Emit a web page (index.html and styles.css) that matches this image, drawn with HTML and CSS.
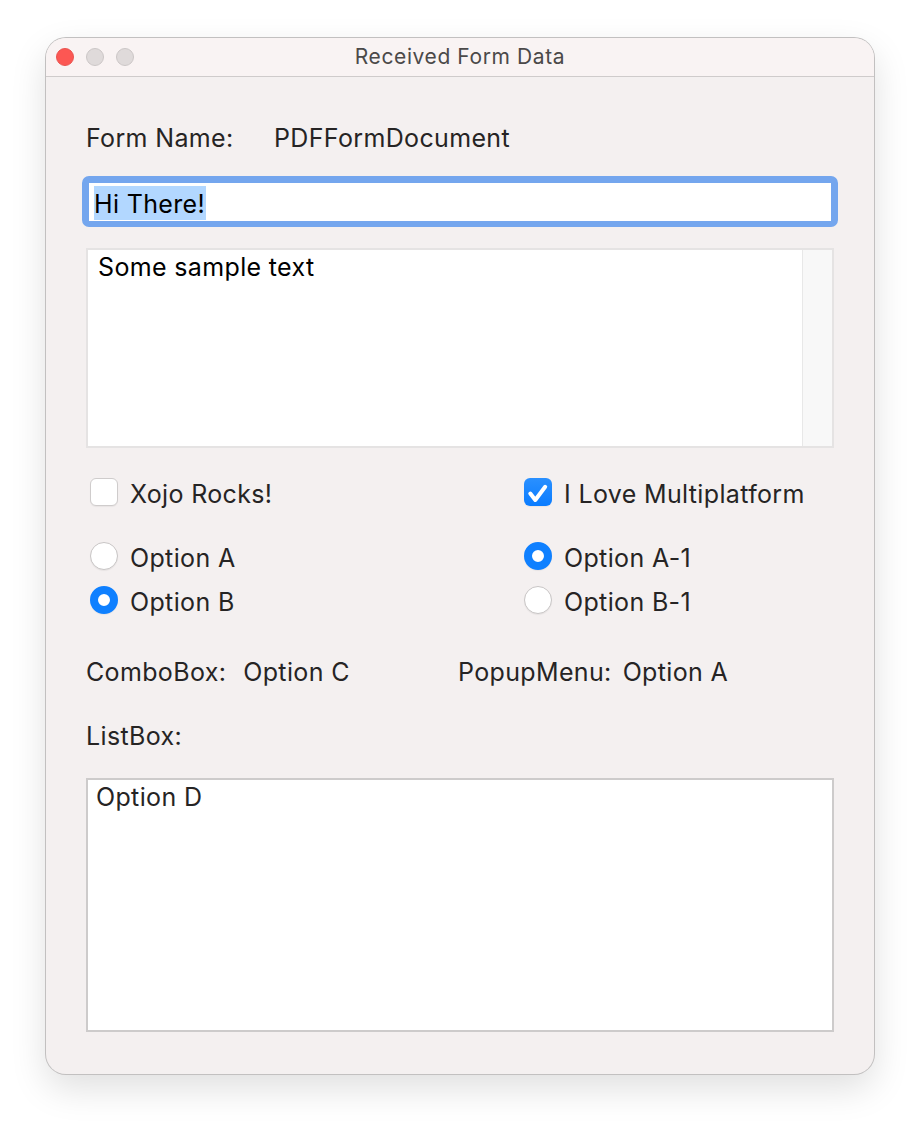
FILE: index.html
```html
<!DOCTYPE html>
<html>
<head>
<meta charset="utf-8" />
<title>Received Form Data</title>
<link rel="stylesheet" href="styles.css">
</head>
<body>
<div class="window">
	<div class="titlebar">
		<div class="lights">
			<span class="light close"></span>
			<span class="light"></span>
			<span class="light"></span>
		</div>
		<div class="title">Received Form Data</div>
	</div>
	<div class="content">
		<div class="row name-row">
			<span class="name-label">Form Name:</span>
			<span>PDFFormDocument</span>
		</div>
		<div class="field"><span class="selected">Hi There!</span></div>
		<div class="textarea">
			<div class="textarea-text">Some sample text</div>
			<div class="scrollbar"></div>
		</div>
		<div class="options">
			<div class="col">
				<div class="opt check-row"><span class="box"></span>Xojo Rocks!</div>
				<div class="opt"><span class="radio"></span>Option A</div>
				<div class="opt"><span class="radio on"></span>Option B</div>
			</div>
			<div class="col">
				<div class="opt check-row">
					<span class="box on">
						<svg viewBox="0 0 28 28" width="28" height="28"><path d="M6.3 15.5 L11.3 22 L21.2 8.8" fill="none" stroke="#fff" stroke-width="4" stroke-linecap="round" stroke-linejoin="round"/></svg>
					</span>I Love Multiplatform
				</div>
				<div class="opt"><span class="radio on"></span>Option A-1</div>
				<div class="opt"><span class="radio"></span>Option B-1</div>
			</div>
		</div>
		<div class="row combo-row">
			<div class="pair combo"><span>ComboBox:</span><span>Option C</span></div>
			<div class="pair popup"><span>PopupMenu:</span><span>Option A</span></div>
		</div>
		<div class="row list-label">ListBox:</div>
		<div class="listbox">Option D</div>
	</div>
</div>
</body>
</html>
```

FILE: styles.css
```css
html{background:#fff;}
body{box-sizing:border-box; margin:0; min-height:1128px; padding:38px 46px 54px; font-family:"Inter","Liberation Sans",sans-serif; font-size:25px; letter-spacing:0.35px; color:#262424;}

.window{box-sizing:border-box; width:828px; height:1036px; background:#f4f0f0; border-radius:20px; overflow:hidden; box-shadow:0 0 0 1px #c2c0c0, 0 14px 36px rgba(0,0,0,0.13);}

.titlebar{position:relative; height:38px; background:#f9f3f3; border-bottom:1px solid #cfcbcb; display:flex; align-items:center; justify-content:center;}
.lights{position:absolute; left:10px; top:10px; display:flex; gap:12px;}
.light{box-sizing:border-box; width:18px; height:18px; border-radius:50%; background:#dfdada; border:1px solid #cbc6c6;}
.light.close{background:#fc5753; border-color:#e9534f;}
.title{padding-bottom:2px; font-size:21px; color:#4b4949; letter-spacing:0.6px;}

.content{padding:0 40px;}
.row{display:flex; align-items:center;}
.name-row{height:44px; margin-top:39px;}
.name-label{width:188px;}

.field{box-sizing:border-box; height:51px; margin:16px -4px 0; padding:3px 0 0 5px; border:solid #74a6ee; border-width:7px 7px 6px; border-radius:7px; background:#fff; background-clip:padding-box; color:#000;}
.selected{box-sizing:border-box; display:inline-block; height:34px; padding:2px 1px 0 0; line-height:32px; background:#b2d7ff;}

.textarea{box-sizing:border-box; display:flex; height:200px; margin-top:21px; background:#fff; border:2px solid #e5e3e3; color:#000;}
.textarea-text{flex:1; padding:1px 10px; line-height:32px;}
.scrollbar{width:29px; background:#f8f8f8; border-left:1px solid #e8e8e8;}

.options{display:grid; grid-template-columns:434px 1fr; margin-top:24px; padding-left:4px;}
.opt{display:flex; align-items:center; gap:12px; height:44px;}
.check-row{margin-bottom:20px;}
.box{box-sizing:border-box; width:28px; height:28px; margin-bottom:4px; border-radius:6px; background:#fff; border:1px solid #cfcccc; box-shadow:0 1px 1px rgba(0,0,0,0.05);}
.box.on{background:linear-gradient(#2a90ff,#0a7cff); border:0;}
.box svg{display:block;}
.radio{box-sizing:border-box; width:28px; height:28px; margin-bottom:4px; border-radius:50%; background:#fff; border:1px solid #c8c5c5; box-shadow:0 1px 1px rgba(0,0,0,0.05);}
.radio.on{border:8px solid #0f80ff;}

.combo-row{height:44px; margin-top:26px;}
.pair{display:flex;}
.combo{width:372px; gap:17px;}
.popup{gap:11px;}
.list-label{height:44px; margin-top:20px;}

.listbox{box-sizing:border-box; height:254px; margin-top:20px; padding:1px 8px; background:#fff; border:2px solid #cdcbcb; line-height:32px;}
```
